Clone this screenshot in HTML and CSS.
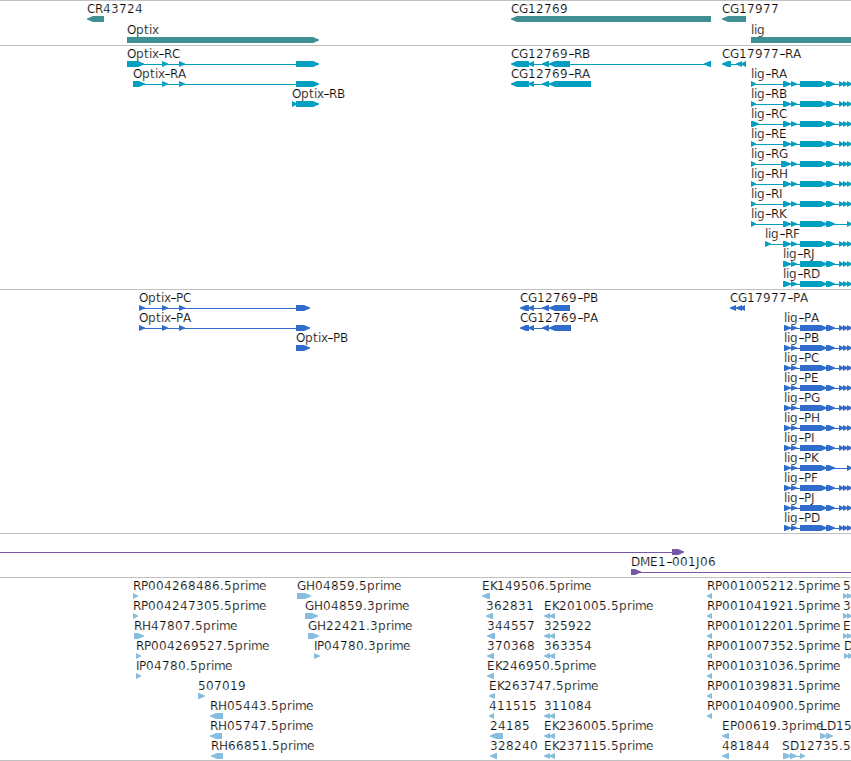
FILE: index.html
```html
<!DOCTYPE html>
<html lang="en">
<head>
<meta charset="utf-8">
<title>Genome browser</title>
<link rel="stylesheet" href="styles.css">
</head>
<body>
<main class="browser">
<section class="track genes"></section>
<section class="track transcripts"></section>
<section class="track proteins"></section>
<section class="track clones"></section>
<section class="track reads"></section>
</main>
<script src="tracks.js"></script>
</body>
</html>
```
FILE: styles.css
```css
body {
  margin: 0;
  background: #fff;
  overflow: hidden;
}
.browser {
  display: flex;
  flex-direction: column;
  width: 851px;
  height: 761px;
  overflow: hidden;
}
.track {
  box-sizing: border-box;
  border-top: 1px solid #c0c0c0;
  flex: none;
}
.track svg {
  display: block;
  overflow: hidden;
}
.track text {
  font: 12px "DejaVu Sans", sans-serif;
  fill: #000;
  stroke: #fff;
  stroke-width: 0.2px;
}
.genes { height: 45px; color: #3f8f93; }
.transcripts { height: 244px; color: #039fc0; }
.proteins { height: 244px; color: #306ccc; }
.clones { height: 44px; color: #7757a8; }
.reads { height: 184px; color: #87bedf; border-bottom: 1px solid #c0c0c0; }
.shape { fill: currentColor; }
```
FILE: tracks.js
```js
const NS = 'http://www.w3.org/2000/svg';
const ADV = { I: 3, P: 7, G: 9, H: 9, O: 9, D: 9, M: 10, J: 4, K: 7, L: 7, A: 8, l: 3, i: 3, t: 5, x: 6, r: 5, m: 11, e: 7, F: 7, '.': 4, '-': 6 };

function add(parent, tag, attrs, text) {
  const el = document.createElementNS(NS, tag);
  for (const k in attrs) el.setAttribute(k, attrs[k]);
  if (text) el.textContent = text;
  parent.appendChild(el);
  return el;
}

function addLabel(svg, label, x, y) {
  const text = add(svg, 'text', { y });
  let pen = x;
  for (const part of label.split(/(-)/)) {
    const xs = [...part].map(c => { const p = pen; pen += ADV[c] || 8; return p; });
    const attrs = { x: xs.join(' ') };
    if (part === '-') { attrs.textLength = 7; attrs.lengthAdjust = 'spacingAndGlyphs'; }
    add(text, 'tspan', attrs, part);
  }
}

// Feature: [label, label x, row top, direction, [[start, end], ...]]
function draw(name, height, features) {
  const svg = document.createElementNS(NS, 'svg');
  svg.setAttribute('width', 851);
  svg.setAttribute('height', height);
  for (const [label, x, y, dir, blocks] of features) {
    const top = y + 12;
    const first = blocks[0][0], last = blocks[blocks.length - 1][1];
    if (blocks.length > 1) add(svg, 'rect', { class: 'shape', x: first + 1, y: top + 3, width: last - first - 2, height: 1 });
    for (const [a, b] of blocks) {
      const t = Math.min(b - a, 6);
      const d = dir > 0
        ? `M${a} ${top}H${b - t}L${b} ${top + 2.5}V${top + 3.5}L${b - t} ${top + 6}H${a}Z`
        : `M${b} ${top}H${a + t}L${a} ${top + 2.5}V${top + 3.5}L${a + t} ${top + 6}H${b}Z`;
      add(svg, 'path', { class: 'shape', d });
    }
    if (label) addLabel(svg, label, x, y + 9);
  }
  document.querySelector('.' + name).appendChild(svg);
}

draw('genes', 44, [
  ['CR43724', 87, 3, -1, [[87, 104]]],
  ['Optix', 127, 24, 1, [[127, 319]]],
  ['CG12769', 511, 3, -1, [[511, 711]]],
  ['CG17977', 722, 3, -1, [[722, 746]]],
  ['lig', 751, 24, 1, [[751, 870]]]
]);

const tail = [[800, 827], [826, 835], [839, 844], [843, 848], [847, 852]];
const ligR = [['RA', 751, 756, 783], ['RB', 751, 756, 783], ['RC', 751, 759, 783], ['RE', 751, 756, 783], ['RG', 751, 756, 781], ['RH', 751, 756, 783], ['RI', 751, 756, 783], ['RK', 751, 756, 783], ['RF', 765, 771, 783], ['RJ', 783, 0, 783], ['RD', 783, 0, 783]]
  .map(([n, x, e, s], i) => ['lig-' + n, x, 23 + 20 * i, 1,
    [...(e ? [[x, e]] : []), [s, 791], [791, 797], ...(n === 'RK' ? [tail[0], tail[1], [847, 852]] : tail)]]);
draw('transcripts', 243, [
  ['Optix-RC', 127, 3, 1, [[127, 144], [162, 168], [179, 185], [296, 319]]],
  ['Optix-RA', 133, 23, 1, [[133, 145], [162, 168], [179, 185], [296, 319]]],
  ['Optix-RB', 292, 43, 1, [[292, 297], [296, 319]]],
  ['CG12769-RB', 511, 3, -1, [[511, 529], [528, 534], [542, 549], [549, 570], [704, 711]]],
  ['CG12769-RA', 511, 23, -1, [[511, 529], [528, 534], [542, 549], [549, 591]]],
  ['CG17977-RA', 722, 3, -1, [[722, 731], [736, 742], [741, 746]]],
  ...ligR
]);

const ligP = ['A', 'B', 'C', 'E', 'G', 'H', 'I', 'K', 'F', 'J', 'D'].map((n, i) =>
  ['lig-P' + n, 784, 23 + 20 * i, 1,
    [[784, 791], [791, 797], ...(n === 'K' ? [tail[0], tail[1], [847, 852]] : tail)]]);
draw('proteins', 243, [
  ['Optix-PC', 139, 3, 1, [[139, 145], [162, 168], [179, 185], [296, 310]]],
  ['Optix-PA', 139, 23, 1, [[139, 145], [162, 168], [179, 185], [296, 310]]],
  ['Optix-PB', 296, 43, 1, [[296, 310]]],
  ['CG12769-PB', 520, 3, -1, [[520, 529], [528, 534], [542, 549], [549, 570]]],
  ['CG12769-PA', 520, 23, -1, [[520, 529], [528, 534], [542, 549], [549, 571]]],
  ['CG17977-PA', 730, 3, -1, [[730, 736], [736, 742], [740, 745]]],
  ...ligP
]);

draw('clones', 43, [
  ['', 0, 3, 1, [[-20, -10], [672, 684]]],
  ['DME1-001J06', 631, 23, 1, [[631, 641], [870, 880]]]
]);

const rows = [
  [['RP004268486.5prime', 133, 1, 133, 138], ['GH04859.5prime', 297, 1, 297, 311], ['EK149506.5prime', 482, -1, 482, 490], ['RP001005212.5prime', 707, -1, 707, 712], ['5', 843, 2, 843, 852]],
  [['RP004247305.5prime', 133, 1, 133, 138], ['GH04859.3prime', 305, 1, 305, 318], ['362831', 486, -1, 486, 493], ['EK201005.5prime', 544, -2, 544, 555], ['RP001041921.5prime', 707, -1, 707, 712], ['3', 843, 2, 843, 852]],
  [['RH47807.5prime', 134, 1, 134, 144], ['GH22421.3prime', 308, 1, 308, 319], ['344557', 487, -1, 487, 495], ['325922', 544, -2, 544, 555], ['RP001012201.5prime', 707, -1, 707, 712], ['E', 843, 2, 843, 852]],
  [['RP004269527.5prime', 136, 1, 136, 141], ['IP04780.3prime', 314, 1, 314, 320], ['370368', 487, -1, 487, 494], ['363354', 544, -2, 544, 555], ['RP001007352.5prime', 707, -1, 707, 712], ['D', 844, 2, 844, 853]],
  [['IP04780.5prime', 136, 1, 136, 141], ['EK246950.5prime', 487, -1, 487, 494], ['RP001031036.5prime', 707, -1, 707, 712]],
  [['507019', 198, 1, 198, 205], ['EK263747.5prime', 489, -1, 489, 495], ['RP001039831.5prime', 707, -1, 707, 712]],
  [['RH05443.5prime', 210, -1, 210, 223], ['411515', 489, -1, 489, 494], ['311084', 544, -2, 544, 555], ['RP001040900.5prime', 707, -1, 707, 712]],
  [['RH05747.5prime', 210, -1, 210, 222], ['24185', 490, -1, 490, 503], ['EK236005.5prime', 544, -2, 544, 555], ['EP00619.3prime', 722, -1, 722, 729], ['LD15', 820, 2, 820, 833]],
  [['RH66851.5prime', 211, -1, 211, 223], ['328240', 490, -1, 490, 497], ['EK237115.5prime', 544, -2, 544, 555], ['481844', 722, -1, 722, 729], ['SD12735.5', 782, 3, 783, 805]]
];
draw('reads', 182, rows.flatMap((row, i) => row.map(([label, x, kind, a, b]) => {
  let blocks = [[a, b]];
  if (kind === 2) { const m = a + Math.floor((b - a) / 2); blocks = [[a, m + 1], [m, b]]; }
  if (kind === -2) blocks = [[a, a + 6], [a + 5, b]];
  if (kind === 3) blocks = [[a, a + 8], [a + 7, a + 14], [a + 17, b]];
  return [label, x, 3 + 20 * i, Math.sign(kind), blocks];
})));
```
